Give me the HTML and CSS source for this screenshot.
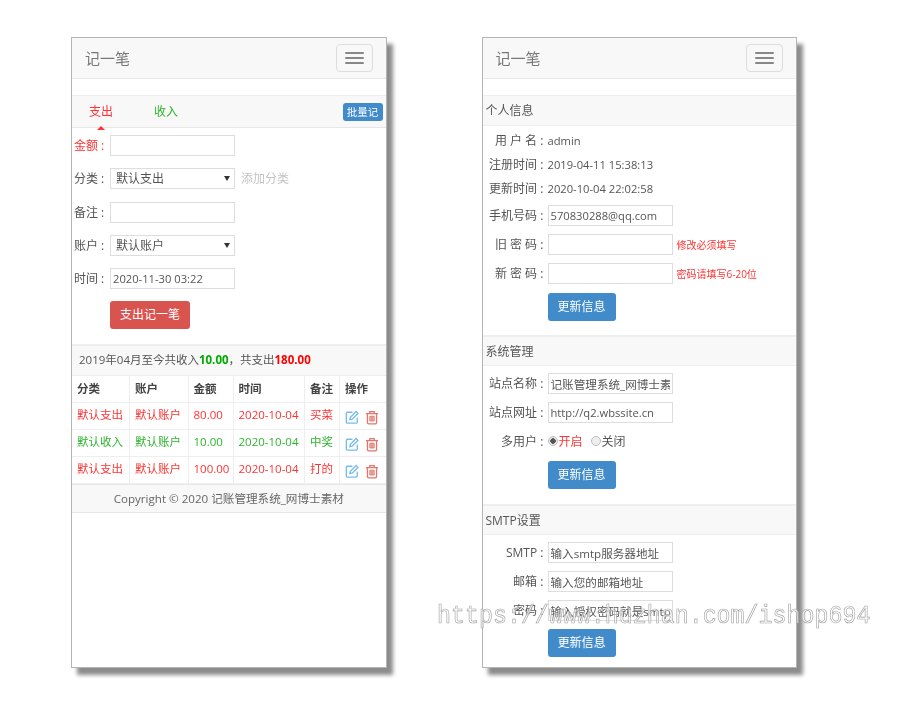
FILE: index.html
```html
<!DOCTYPE html>
<html lang="zh">
<head>
<meta charset="utf-8">
<title>记一笔</title>
<link rel="stylesheet" href="styles.css">
</head>
<body>
<main class="stage">
  <section class="phone">
    <header class="navbar"><span class="brand">记一笔</span><button class="toggle"><i></i><i></i><i></i></button></header>
    <div class="tabs">
      <span class="tab red active">支出</span>
      <span class="tab green">收入</span>
      <span class="batch">批量记</span>
    </div>
    <form class="bill">
      <div class="bill-row"><label class="red">金额 :</label><input class="field" type="text"></div>
      <div class="bill-row"><label>分类 :</label><span class="select"><select class="field"><option>默认支出</option></select></span><span class="add">添加分类</span></div>
      <div class="bill-row"><label>备注 :</label><input class="field" type="text"></div>
      <div class="bill-row"><label>账户 :</label><span class="select"><select class="field"><option>默认账户</option></select></span></div>
      <div class="bill-row"><label>时间 :</label><input class="field latin" type="text" value="2020-11-30 03:22"></div>
      <div class="bill-row"><button class="btn danger" type="button">支出记一笔</button></div>
    </form>
    <div class="summary">2019年04月至今共收入<b class="green">10.00</b>，共支出<b class="red">180.00</b></div>
    <table class="ledger">
      <colgroup><col class="c1"><col class="c2"><col class="c3"><col class="c4"><col class="c5"><col class="c6"></colgroup>
      <thead><tr><th>分类</th><th>账户</th><th>金额</th><th>时间</th><th>备注</th><th>操作</th></tr></thead>
      <tbody>
        <tr class="red"><td>默认支出</td><td>默认账户</td><td>80.00</td><td>2020-10-04</td><td>买菜</td><td class="ops">
          <svg class="ico" viewBox="0 0 16 16"><path class="blue" d="M8.500 2H3A1.500 1.500 0 0 0 1.500 3.500v9.500A1.500 1.500 0 0 0 3 14.500h9.500A1.500 1.500 0 0 0 14 13V8"/><path class="blue" d="M5.500 10.500l.7-2.600L12.700 1.200l2.100 2.100-6.600 6.600z"/></svg>
          <svg class="ico" viewBox="0 0 16 16"><path class="rose" d="M1 3.500h14M5.500 3.500V1.200h5v2.300M2.800 3.500v10.200A1.500 1.500 0 0 0 4.300 15.200h7.400a1.500 1.500 0 0 0 1.500-1.500V3.500"/><path class="rose bars" d="M5.500 6.500h5v5.500h-5zM8 6.500v5.500"/></svg></td></tr>
        <tr class="green"><td>默认收入</td><td>默认账户</td><td>10.00</td><td>2020-10-04</td><td>中奖</td><td class="ops">
          <svg class="ico" viewBox="0 0 16 16"><path class="blue" d="M8.500 2H3A1.500 1.500 0 0 0 1.500 3.500v9.500A1.500 1.500 0 0 0 3 14.500h9.500A1.500 1.500 0 0 0 14 13V8"/><path class="blue" d="M5.500 10.500l.7-2.600L12.700 1.200l2.100 2.100-6.600 6.600z"/></svg>
          <svg class="ico" viewBox="0 0 16 16"><path class="rose" d="M1 3.500h14M5.500 3.500V1.200h5v2.300M2.800 3.500v10.200A1.500 1.500 0 0 0 4.300 15.200h7.400a1.500 1.500 0 0 0 1.500-1.500V3.500"/><path class="rose bars" d="M5.500 6.500h5v5.500h-5zM8 6.500v5.500"/></svg></td></tr>
        <tr class="red"><td>默认支出</td><td>默认账户</td><td>100.00</td><td>2020-10-04</td><td>打的</td><td class="ops">
          <svg class="ico" viewBox="0 0 16 16"><path class="blue" d="M8.500 2H3A1.500 1.500 0 0 0 1.500 3.500v9.500A1.500 1.500 0 0 0 3 14.500h9.500A1.500 1.500 0 0 0 14 13V8"/><path class="blue" d="M5.500 10.500l.7-2.600L12.700 1.200l2.100 2.100-6.600 6.600z"/></svg>
          <svg class="ico" viewBox="0 0 16 16"><path class="rose" d="M1 3.500h14M5.500 3.500V1.200h5v2.300M2.800 3.500v10.200A1.500 1.500 0 0 0 4.300 15.200h7.400a1.500 1.500 0 0 0 1.500-1.500V3.500"/><path class="rose bars" d="M5.500 6.500h5v5.500h-5zM8 6.500v5.500"/></svg></td></tr>
      </tbody>
    </table>
    <footer class="copyright">Copyright © 2020 记账管理系统_网博士素材</footer>
  </section>

  <section class="phone">
    <header class="navbar"><span class="brand">记一笔</span><button class="toggle"><i></i><i></i><i></i></button></header>
    <h2 class="head first">个人信息</h2>
    <div class="group one">
      <div class="line text"><label>用 户 名 : </label><span class="latin">admin</span></div>
      <div class="line text"><label>注册时间 : </label><span class="latin">2019-04-11 15:38:13</span></div>
      <div class="line text"><label>更新时间 : </label><span class="latin">2020-10-04 22:02:58</span></div>
      <div class="line"><label>手机号码 : </label><input class="field latin" type="text" value="570830288@qq.com"></div>
      <div class="line"><label>旧 密 码 : </label><input class="field" type="password"><small>修改必须填写</small></div>
      <div class="line"><label>新 密 码 : </label><input class="field" type="password"><small>密码请填写6-20位</small></div>
      <div class="line action"><button class="btn primary" type="button">更新信息</button></div>
    </div>
    <h2 class="head">系统管理</h2>
    <div class="group two">
      <div class="line"><label>站点名称 : </label><input class="field" type="text" value="记账管理系统_网博士素材"></div>
      <div class="line"><label>站点网址 : </label><input class="field latin" type="text" value="http://q2.wbssite.cn"></div>
      <div class="line radios"><label>多用户 : </label><input class="radio" type="radio" name="multi" checked><span class="red on">开启</span><input class="radio" type="radio" name="multi"><span>关闭</span></div>
      <div class="line action"><button class="btn primary" type="button">更新信息</button></div>
    </div>
    <h2 class="head">SMTP设置</h2>
    <div class="group three">
      <div class="line"><label>SMTP : </label><input class="field" type="text" value="输入smtp服务器地址"></div>
      <div class="line"><label>邮箱 : </label><input class="field" type="text" value="输入您的邮箱地址"></div>
      <div class="line"><label>密码 : </label><input class="field" type="text" value="输入授权密码就是smtp"></div>
      <div class="line action"><button class="btn primary" type="button">更新信息</button></div>
    </div>
  </section>
  <div class="watermark">https://www.huzhan.com/ishop694</div>
</main>
</body>
</html>
```
FILE: styles.css
```css
* { box-sizing: border-box; }
html, body { margin: 0; height: 100%; background: #fff; }
body { font: 12px/1.4 "Open Sans", "Noto Sans CJK SC", sans-serif; color: #555; overflow: hidden; }
.stage { position: relative; width: 900px; height: 704px; display: flex; gap: 95px; padding: 37px 0 0 71px; }
.phone { width: 315.500px; height: 631px; background: #fff; border: 1px solid #b4b4b4; box-shadow: 6px 7px 4px #8c8c8c; overflow: hidden; }
.navbar, .tabs, .bill, .summary, .ledger, .copyright, .head, .group { filter: blur(.45px); }
.red { color: #f33; }
.green { color: #2db52d; }
b.red { color: #f00; }
b.green { color: #0a0; }

.navbar { height: 41px; background: #f8f8f8; border-bottom: 1px solid #e7e7e7; display: flex; align-items: center; justify-content: space-between; padding: 0 13px; margin-bottom: 16px; }
.brand { font-size: 15px; color: #777; }
.toggle { width: 37px; height: 28px; padding: 0; background: transparent; border: 1px solid #ddd; border-radius: 4px; display: flex; flex-direction: column; align-items: center; justify-content: center; gap: 3px; }
.toggle i { width: 19px; height: 2px; background: #888; border-radius: 1px; }

.tabs { height: 33px; background: #f8f8f8; border-top: 1px solid #eee; border-bottom: 1px solid #e7e7e7; display: flex; align-items: center; padding: 0 3px 0 17px; position: relative; }
.tab { width: 65px; text-align: left; position: relative; padding-top: 2px; }
.tab.active::after { content: ""; position: absolute; left: 8px; bottom: -9px; border: 4px solid transparent; border-top: 0; border-bottom-color: #f33; }
.batch { margin-left: auto; width: 40px; text-align: center; background: #428bca; color: #fff; font-size: 10.500px; line-height: 18px; border-radius: 3px; }

.bill { display: flex; flex-direction: column; gap: 12.250px; padding: 7px 0 0 2px; height: 216px; }
.bill-row { display: flex; align-items: center; height: 21px; }
.bill-row label { width: 36px; white-space: pre; padding-top: 2px; }
.bill-row:last-child { height: 28px; padding-left: 36px; }
.field { width: 125px; height: 21px; padding: 0 2px; border: 1px solid #ddd; background: #fff; color: #555; font: inherit; font-size: 11.600px; border-radius: 0; outline: 0; }
.latin { font-size: 11.200px; }
.select { position: relative; display: block; }
.select select { appearance: none; padding: 2px 0 0 5px; display: block; font-size: 12px; }
.select::after { content: ""; position: absolute; right: 5px; top: 8px; border: 3px solid transparent; border-bottom: 0; border-top: 5px solid #333; }
.add { margin-left: 6px; color: #c4c4c4; padding-top: 2px; }
.btn { border: 0; border-radius: 3px; color: #fff; font: inherit; height: 28px; padding: 0; }
.danger { width: 80px; background: #d9534f; }
.primary { width: 68px; background: #428bca; }

.summary { height: 31px; border-top: 2px solid #eee; background: #f8f8f8; padding-left: 7px; line-height: 28px; color: #555; font-size: 11.500px; }
.ledger { width: 314px; table-layout: fixed; border-collapse: collapse; font-size: 11.500px; }
.c1 { width: 57.500px; } .c2 { width: 58.500px; } .c3 { width: 45px; } .c4 { width: 71.500px; } .c5 { width: 35px; } .c6 { width: 46.500px; }
.ledger th, .ledger td { height: 27px; padding: 0 0 1px 5px; border: 1px solid #eee; text-align: left; white-space: nowrap; overflow: hidden; font-weight: 400; }
.ledger tr > :first-child { border-left: 0; }
.ledger tr > :last-child { border-right: 0; }
.ledger th { color: #444; font-weight: 600; background: #fff; padding-top: 1px; padding-bottom: 0; }
.ledger .ops { padding: 2px 0 0 5px; }
.ico { width: 14px; height: 15px; vertical-align: middle; margin-right: 3px; }
.ico path { fill: none; stroke-width: 1.500; }
.ico .bars { fill: #f0b3ac; stroke-width: 1; }
.blue { stroke: #74bcec; }
.rose { stroke: #e0766c; }
.copyright { height: 29px; background: #f8f8f8; border-bottom: 1px solid #e7e7e7; border-top: 1px solid #e7e7e7; text-align: center; line-height: 28px; color: #666; font-size: 11.600px; }

.head { margin: 0; height: 31px; background: #f8f8f8; border-top: 2px solid #eee; border-bottom: 1px solid #eee; padding-left: 3px; font-size: 12px; font-weight: 400; line-height: 29px; color: #555; }
.head.first { border-top-width: 1px; }
.group { display: flex; flex-direction: column; }
.one { height: 209px; padding-top: 2px; }
.two { height: 138px; padding-top: 7px; }
.three { height: 133px; padding-top: 7px; }
.line { display: flex; align-items: center; height: 21px; margin-bottom: 8px; }
.line label { width: 65px; padding: 2px 1px 0 0; text-align: right; white-space: pre; flex: none; }
.line.text { height: 24px; margin-bottom: 0; }
.line.text span { padding-top: 1px; }
.one .line.text:nth-child(3) { margin-bottom: 5px; }
.line small { color: #f33; font-size: 10px; margin-left: 4px; }
.line .field { flex: none; }
.line.action { height: 28px; padding-left: 65px; }
.one .line.action { margin-top: 1px; }
.radios { height: 24px; margin-top: -2px; margin-bottom: 8px; }
.radios span { padding-top: 2px; }
.radio { appearance: none; width: 10px; height: 10px; margin: 0 1px 0 0; border-radius: 50%; border: 1px solid #bbb; background: #eee; }
.radio:checked { background: radial-gradient(circle, #555 0 2.500px, #eee 3px); }
.on { margin-right: 8px; }

.watermark { position: absolute; left: 437px; top: 601px; font: 23.300px/30px "Liberation Mono", monospace; color: rgba(255, 255, 255, .55); -webkit-text-stroke: .6px #a2a2a2; white-space: nowrap; transform: scaleY(1.1); }
```
